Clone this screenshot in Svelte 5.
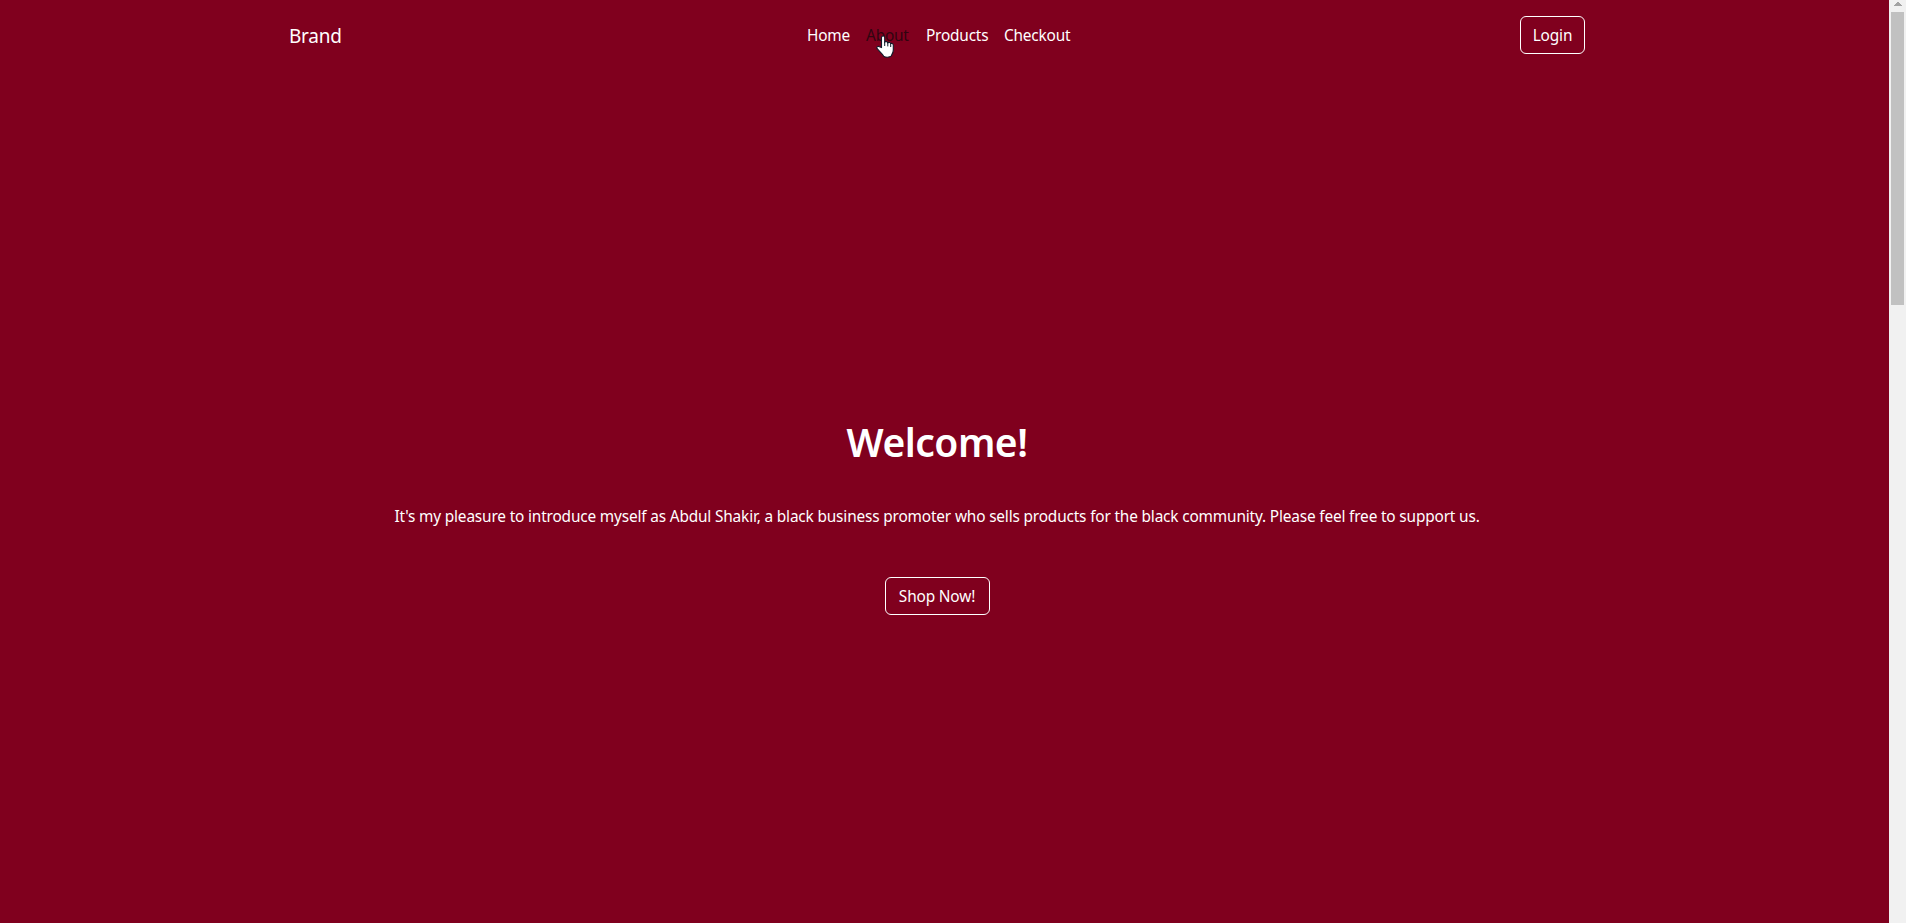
<script>
  const links = [
    { label: 'Home', width: 43 },
    { label: 'About', width: 44, active: true },
    { label: 'Products', width: 62 },
    { label: 'Checkout', width: 67 }
  ];
</script>

<div class="window">
  <div class="page">
    <header class="navbar">
      <a class="brand" href="#top">Brand</a>
      <nav>
        {#each links as link}
          <a class="nav-link" class:active={link.active} style:width="{link.width}px" href="#{link.label}">{link.label}</a>
        {/each}
      </nav>
      <button class="login">Login</button>
    </header>
    <main>
      <h1>Welcome!</h1>
      <p>It's my pleasure to introduce myself as Abdul Shakir, a black business promoter who sells products for the black community. Please feel free to support us.</p>
      <button class="shop">Shop Now!</button>
    </main>
  </div>
  <div class="scrollbar">
    <svg class="arrow" width="8" height="4" viewBox="0 0 8 4" shape-rendering="crispEdges"><path d="M3 0h2v1h1v1h1v1h1v1H0V3h1V2h1V1h1z" fill="#a3a3a3" /></svg>
    <div class="thumb"></div>
  </div>
  <svg class="cursor" width="18" height="24" viewBox="0 0 18 24">
    <path d="M5.5 12.5V2.6C5.5 .4 8.7.4 8.7 2.6V7.2C9.5 6.2 11.5 6.4 11.8 7.8C12.8 7 14.4 7.3 14.7 8.6C15.8 8 17.3 8.8 17.3 10.2V15C17.3 18 15.8 19.7 15.1 21.1C14.3 22.6 8.6 22.6 7.6 21.1C6.3 18.5 3.3 16.3 1.2 13.7C.1 11.8 2.3 10.8 3.5 11.7Z" fill="#fff" stroke="#111a29" stroke-width="1.1" />
    <path d="M8.7 6.5V11M11.8 7.5V11.4M14.7 8.5V12" fill="none" stroke="#111a29" stroke-width="1" />
  </svg>
</div>

<style>
  :global(body) { background: #80001e; overflow: hidden; }
  .window { position: relative; display: flex; width: 1906px; height: 923px; background: #80001e; color: #fff; font: 15.4px/24px "Noto Sans", sans-serif; overflow: hidden; }
  .page { width: 1874px; margin-right: 15px; display: flex; flex-direction: column; }
  .navbar { box-sizing: border-box; width: 1296px; height: 70px; margin: 0 auto; display: grid; grid-template-columns: 518px 1fr 65px; align-items: center; }
  a { color: #fff; text-decoration: none; white-space: nowrap; }
  .brand { font-size: 19px; line-height: 30px; letter-spacing: -.25px; padding-top: 2px; }
  nav { display: flex; gap: 16px; padding-top: 2px; }
  .nav-link { letter-spacing: -.2px; }
  .active { color: #300510; }
  button { box-sizing: border-box; height: 38px; padding: 1px 0 0; border: 1px solid #fff; border-radius: 6px; background: transparent; color: #fff; font: inherit; letter-spacing: -.15px; }
  .login { width: 65px; }
  .shop { width: 105px; }
  main { display: flex; flex-direction: column; align-items: center; padding-top: 348px; }
  h1 { margin: 0 0 39px; font-size: 39px; line-height: 48px; font-weight: 600; letter-spacing: -.5px; }
  p { margin: 0 0 48px; white-space: nowrap; letter-spacing: -.165px; }
  .scrollbar { width: 17px; background: #f1f1f1; display: flex; flex-direction: column; align-items: center; }
  .arrow { display: block; margin: 2px 0 6px; }
  .thumb { width: 13px; height: 293px; background: #c1c1c1; }
  .cursor { position: absolute; left: 876px; top: 35px; }
</style>
